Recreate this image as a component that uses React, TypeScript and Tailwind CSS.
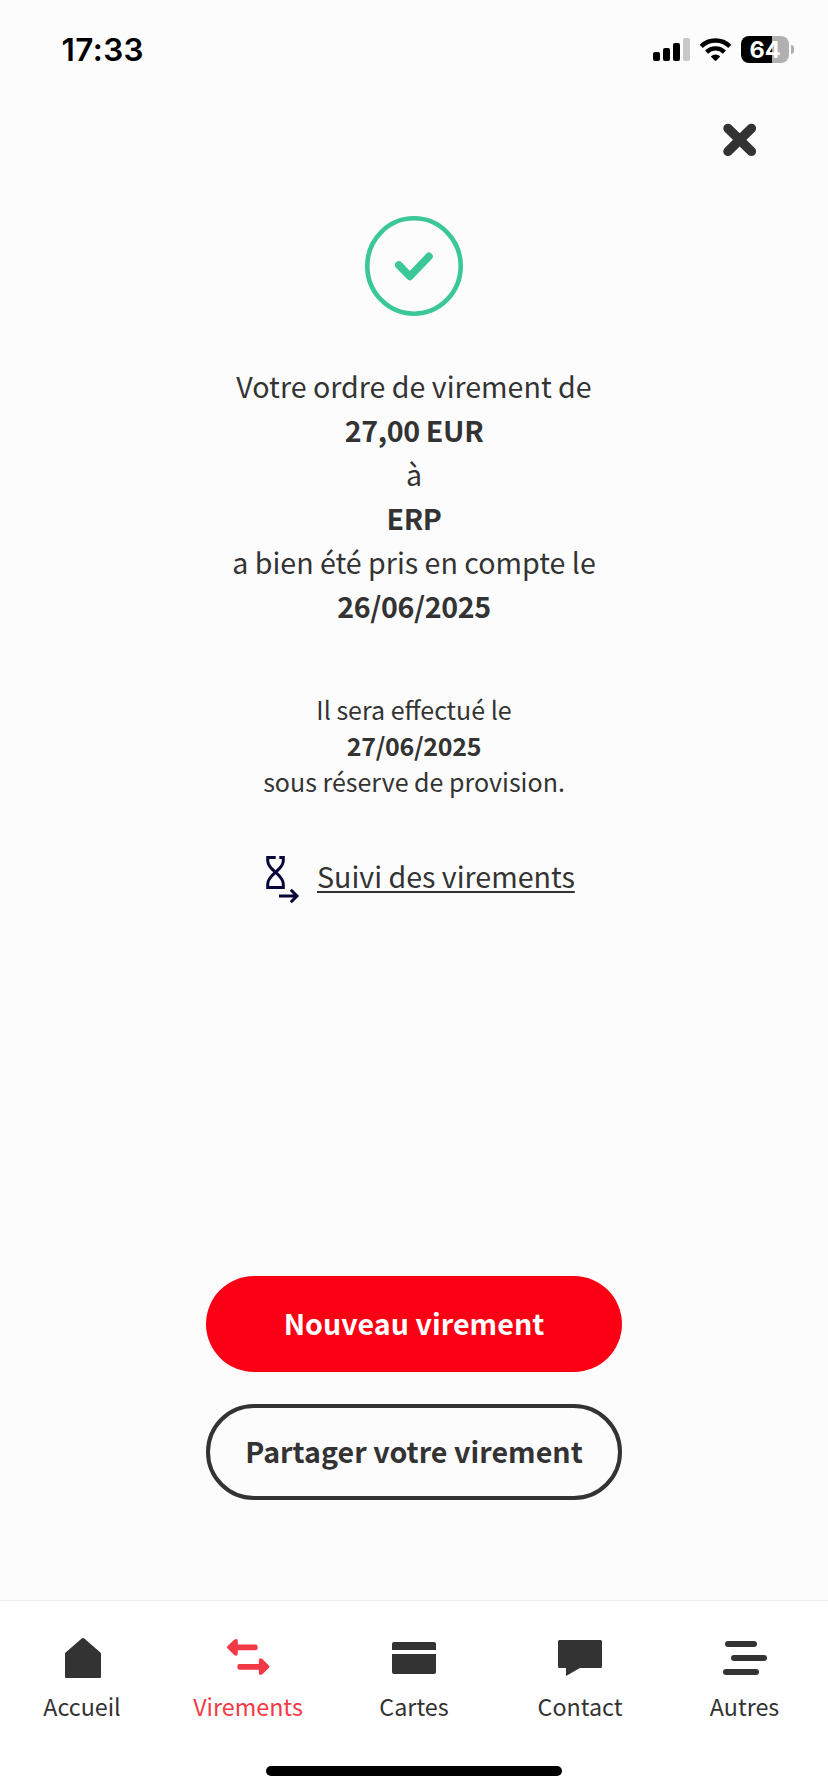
import type { ReactNode } from "react";

const tabs = [
  {
    label: "Accueil",
    active: false,
    icon: (
      <path d="M22 0.2Q23 -0.4 24 0.2L40.4 14.6Q41 15.2 41 16V39Q41 40 40 40H6Q5 40 5 39V16Q5 15.2 5.6 14.6Z" />
    ),
  },
  {
    label: "Virements",
    active: true,
    icon: (
      <>
        <path d="M1.6 8L8.2 1.7Q11.8 -0.4 11.8 3.4V6.4H29.6Q31.6 6.4 31.6 8.4V10.2Q31.6 12.2 29.6 12.2H11.8V15.2Q11.8 19 8.2 16.9L1.6 10.6Q0.4 9.3 1.6 8Z" />
        <path d="M42.8 27.4L36.4 21.1Q32.8 19 32.8 22.8V25.9H13.4Q11.4 25.9 11.4 27.9V29.7Q11.4 31.7 13.4 31.7H32.8V34.6Q32.8 38.4 36.4 36.3L42.8 30Q44 28.7 42.8 27.4Z" />
      </>
    ),
  },
  {
    label: "Cartes",
    active: false,
    icon: (
      <>
        <path d="M0 12V6Q0 4 2 4H42Q44 4 44 6V12Z" />
        <path d="M0 16H44V34Q44 36 42 36H2Q0 36 0 34Z" />
      </>
    ),
  },
  {
    label: "Contact",
    active: false,
    icon: (
      <path d="M1.5 2H42.5Q44 2 44 3.5V28.5Q44 30 42.5 30H22L8 38V30H1.5Q0 30 0 28.5V3.5Q0 2 1.5 2Z" />
    ),
  },
  {
    label: "Autres",
    active: false,
    icon: (
      <>
        <rect x="1" y="3" width="32" height="6" rx="3" />
        <rect x="7" y="17" width="36" height="6" rx="3" />
        <rect x="-1" y="31" width="36" height="6" rx="3" />
      </>
    ),
  },
];

function StatusBar() {
  return (
    <div className="flex h-[99px] items-center justify-between pl-[61.5px] pr-[34px] font-['Inter',sans-serif] text-black">
      <span className="pt-px text-[31.5px] font-semibold leading-none tracking-[0.4px]">
        17:33
      </span>
      <div className="flex items-center">
        <svg width="37" height="23" viewBox="0 0 37 23">
          <rect x="0" y="14" width="7" height="9" rx="2" />
          <rect x="10" y="10" width="7" height="13" rx="2" />
          <rect x="20" y="5" width="7" height="18" rx="2" />
          <rect x="30" y="0" width="7" height="23" rx="2" fill="#c8c8c8" />
        </svg>
        <svg className="ml-[9px]" width="33" height="25" viewBox="0 0 33 25">
          <g fill="none" stroke="#000" strokeWidth="4.4">
            <path d="M2.2 9.4A20.4 20.4 0 0 1 30.8 9.4" />
            <path d="M7.6 15.1A12.6 12.6 0 0 1 25.4 15.1" />
          </g>
          <path d="M11.8 19.4A6.8 6.8 0 0 1 21.2 19.4L17.4 23.5Q16.5 24.4 15.6 23.5Z" />
        </svg>
        <div className="ml-[9px] flex h-[27px] w-12 items-center justify-center rounded-[8px] bg-[linear-gradient(to_right,#000_31px,#b0b0b0_31px)]">
          <span className="text-[23.5px] font-bold leading-none text-white">
            64
          </span>
        </div>
        <div className="ml-[2px] h-[9px] w-[3px] rounded-r-full bg-[#b0b0b0]" />
      </div>
    </div>
  );
}

function Button({ children, primary }: { children: ReactNode; primary?: boolean }) {
  return (
    <button
      className={`flex h-24 w-[416px] items-center justify-center rounded-full pb-px text-[28.6px] font-bold tracking-[0.04px] ${
        primary ? "bg-[#fb0014] text-white" : "border-4 border-[#333] text-[#333]"
      }`}
    >
      {children}
    </button>
  );
}

export default function App() {
  return (
    <div className="flex h-[1792px] w-full flex-col overflow-hidden bg-[#fcfcfc] font-['Noto_Sans_CJK_SC',sans-serif] text-[#333]">
      <StatusBar />

      <div className="flex h-[81px] justify-end pr-[70px] pt-[23px]">
        <button aria-label="Fermer" className="h-9 w-9">
          <svg width="36" height="36" viewBox="0 0 36 36">
            <path
              d="M6 6.4L29.4 29.4M29.4 6.4L6 29.4"
              stroke="#333"
              strokeWidth="9.4"
              strokeLinecap="round"
            />
          </svg>
        </button>
      </div>

      <main className="flex flex-1 flex-col items-center pt-[36px]">
        <svg width="98" height="100" viewBox="0 0 98 100" fill="none" stroke="#3bc797">
          <ellipse cx="49" cy="50" rx="46.7" ry="47.7" strokeWidth="4.6" />
          <path
            d="M33.8 49L44.8 60.4L64 40.4"
            strokeWidth="7.6"
            strokeLinecap="round"
            strokeLinejoin="round"
          />
        </svg>

        <div className="mt-[48px] text-center text-[28.6px] leading-[44px]">
          <p>Votre ordre de virement de</p>
          <p className="font-semibold tracking-[-0.35px]">27,00 EUR</p>
          <p>à</p>
          <p className="font-semibold tracking-[-0.35px]">ERP</p>
          <p>a bien été pris en compte le</p>
          <p className="font-semibold tracking-[-0.35px]">26/06/2025</p>
        </div>

        <div className="mt-[63px] text-center text-[25px] leading-9">
          <p>Il sera effectué le</p>
          <p className="font-semibold tracking-[-0.3px]">27/06/2025</p>
          <p>sous réserve de provision.</p>
        </div>

        <div className="mt-[55px] flex h-[50px] w-[310px] items-center">
          <svg
            className="ml-[5px] shrink-0"
            width="36"
            height="50"
            viewBox="0 0 36 50"
            fill="none"
            stroke="#05053a"
            strokeWidth="3"
          >
            <path d="M11.7 3.4H3.7V6.5C3.7 12.5 8.5 15.5 11.5 18.2C14.5 21 19.3 24.5 19.3 30V33.5H3.7V30C3.7 24.5 8.5 21 11.5 18.2C14.5 15.5 19.3 12.5 19.3 6.5V3.4H15.3" />
            <path d="M15 42H33M26.8 35.8L33 42L26.8 48.2" />
          </svg>
          <a
            href="#"
            className="ml-[17px] whitespace-nowrap pb-[5px] text-[28.6px] underline decoration-2 underline-offset-[3px] [text-decoration-skip-ink:none]"
          >
            Suivi des virements
          </a>
        </div>

        <div className="mb-[100px] mt-auto flex flex-col gap-8">
          <Button primary>Nouveau virement</Button>
          <Button>Partager votre virement</Button>
        </div>
      </main>

      <footer className="flex h-[192px] flex-col items-center border-t border-[#ececec] bg-white">
        <nav className="grid w-[830px] grid-cols-5 pt-[37px]">
          {tabs.map((tab) => (
            <a
              key={tab.label}
              href="#"
              className={`flex flex-col items-center last:[&>span]:mr-[3px] ${
                tab.active ? "text-[#f23a46]" : "text-[#333]"
              }`}
            >
              <svg
                className="overflow-visible"
                width="44"
                height="40"
                viewBox="0 0 44 40"
                fill="currentColor"
              >
                {tab.icon}
              </svg>
              <span className="mt-[10px] text-[23.3px] leading-9">{tab.label}</span>
            </a>
          ))}
        </nav>
        <div className="mb-4 mt-auto h-[10px] w-[296px] rounded-full bg-black" />
      </footer>
    </div>
  );
}
